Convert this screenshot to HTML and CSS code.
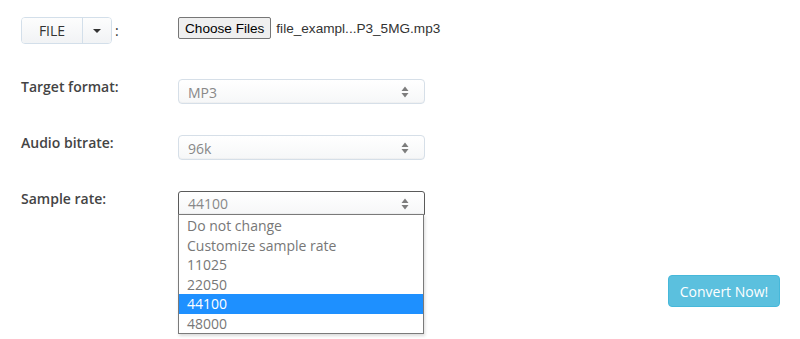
FILE: index.html
```html
<!DOCTYPE html>
<html lang="en">
<head>
    <meta charset="UTF-8">
    <meta name="viewport" content="width=device-width, initial-scale=1.0">
    <title>Audio converter</title>
    <link rel="stylesheet" href="styles.css">
</head>
<body>

<div class="form">

    <div class="row row-file">
        <div class="source">
            <div class="btn-group">
                <button class="btn-file">FILE</button>
                <button class="btn-caret"><span class="caret"></span></button>
            </div>
            <span class="colon">:</span>
        </div>
        <div class="file-input">
            <button class="choose">Choose Files</button>
            <span class="file-name">file_exampl...P3_5MG.mp3</span>
        </div>
    </div>

    <div class="row">
        <label class="label">Target format:</label>
        <div class="select-wrap">
            <div class="select">
                <span>MP3</span>
                <svg class="arrows" width="8" height="12" viewBox="0 0 8 12"><path d="M4 0.5L7.5 5H0.5Z M4 11.5L0.5 7H7.5Z" fill="#7d7d7d"/></svg>
            </div>
        </div>
    </div>

    <div class="row">
        <label class="label">Audio bitrate:</label>
        <div class="select-wrap">
            <div class="select">
                <span>96k</span>
                <svg class="arrows" width="8" height="12" viewBox="0 0 8 12"><path d="M4 0.5L7.5 5H0.5Z M4 11.5L0.5 7H7.5Z" fill="#7d7d7d"/></svg>
            </div>
        </div>
    </div>

    <div class="row row-last">
        <label class="label">Sample rate:</label>
        <div class="select-wrap">
            <div class="select open">
                <span>44100</span>
                <svg class="arrows" width="8" height="12" viewBox="0 0 8 12"><path d="M4 0.5L7.5 5H0.5Z M4 11.5L0.5 7H7.5Z" fill="#7d7d7d"/></svg>
            </div>
            <ul class="options">
                <li>Do not change</li>
                <li>Customize sample rate</li>
                <li>11025</li>
                <li>22050</li>
                <li class="selected">44100</li>
                <li>48000</li>
            </ul>
        </div>
    </div>

    <div class="actions">
        <button class="convert">Convert Now!</button>
    </div>

</div>

</body>
</html>
```

FILE: styles.css
```css
body {
    margin: 0;
    min-height: 100vh;
    background-color: #fff;
    color: #333;
    font-family: "Open Sans", Arial, sans-serif;
    font-size: 14px;
}

.form {
    padding: 17px 20px 0 21px;
}

.row {
    display: grid;
    grid-template-columns: 157px 247px;
    align-items: start;
    height: 56px;
}

.row-file {
    height: 61px;
}

.row-last {
    height: 85px;
}

.label {
    font-weight: 600;
    color: #444;
    line-height: 20px;
    margin-top: -1px;
}

/* кнопка FILE с выпадающим меню */
.source {
    display: flex;
    align-items: center;
}

.btn-group {
    display: flex;
    height: 27px;
    border: 1px solid #d3dfea;
    border-radius: 4px;
    box-sizing: border-box;
    overflow: hidden;
}

.btn-group button {
    border: none;
    margin: 0;
    background: linear-gradient(#fdfdfd, #f1f3f5);
    font-family: "Open Sans", Arial, sans-serif;
    color: #333;
    padding: 0;
}

.btn-file {
    width: 61px;
    font-size: 14px;
    border-right: 1px solid #d3dfea !important;
}

.btn-caret {
    width: 28px;
    display: flex;
    align-items: center;
    justify-content: center;
}

.caret {
    width: 0;
    height: 0;
    border-left: 4px solid transparent;
    border-right: 4px solid transparent;
    border-top: 4px solid #333;
}

.colon {
    margin-left: 3px;
    line-height: 20px;
}

/* поле выбора файла */
.file-input {
    display: flex;
    align-items: center;
    white-space: nowrap;
    font-family: "Liberation Sans", Arial, sans-serif;
    font-size: 13.6px;
    color: #333;
}

.choose {
    flex: none;
    height: 22px;
    padding: 0 6px;
    background-color: #efefef;
    border: 1px solid #767676;
    border-radius: 2px;
    font-family: "Liberation Sans", Arial, sans-serif;
    font-size: 13.6px;
    color: #000;
    white-space: nowrap;
}

.file-name {
    margin-left: 5px;
}

/* выпадающие списки */
.select-wrap {
    position: relative;
    margin-top: 1px;
}

.select {
    display: flex;
    align-items: center;
    justify-content: space-between;
    height: 25px;
    box-sizing: border-box;
    padding: 1px 15px 0 9px;
    border: 1px solid #d6dfe8;
    border-radius: 4px;
    background: linear-gradient(#ffffff, #f6f7f8);
    box-shadow: inset 0 -1px 1px rgba(0, 0, 0, 0.03);
    color: #888;
}

.select.open {
    height: 24px;
    border-color: #5a5a5a;
    border-radius: 3px 3px 0 0;
}

.options {
    position: absolute;
    top: 23px;
    left: 0;
    width: 246px;
    box-sizing: border-box;
    margin: 0;
    padding: 1px 0 0;
    list-style: none;
    background-color: #fff;
    border: 1px solid #7a7a7a;
    box-shadow: 1px 2px 3px rgba(0, 0, 0, 0.15);
    color: #777;
}

.options li {
    height: 19.5px;
    line-height: 19.5px;
    padding-left: 8px;
}

.options li.selected {
    background-color: #1e90ff;
    color: #fff;
}

.actions {
    display: flex;
    justify-content: flex-end;
}

.convert {
    width: 112px;
    height: 32px;
    background-color: #5bc0de;
    border: 1px solid #46b8da;
    border-radius: 4px;
    color: #fff;
    font-family: "Open Sans", Arial, sans-serif;
    font-size: 14px;
    cursor: pointer;
}

.convert:hover {
    background-color: #31b0d5;
}
```
